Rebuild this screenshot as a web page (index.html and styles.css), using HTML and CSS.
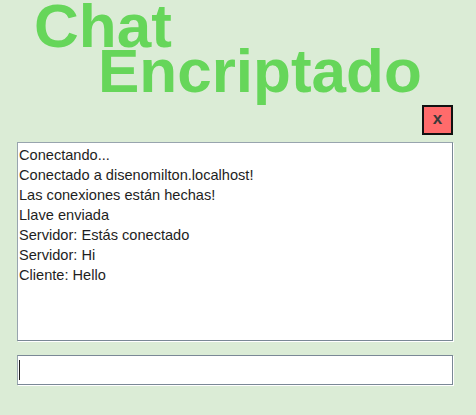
FILE: index.html
```html
<!DOCTYPE html>
<html lang="es">
<head>
<meta charset="utf-8">
<title>Chat Encriptado</title>
<link rel="stylesheet" href="styles.css">
</head>
<body>
<div class="app">
  <header class="title">
    <div class="title-line1">Chat</div>
    <div class="title-line2">Encriptado</div>
  </header>
  <div class="toolbar">
    <button class="close-btn" type="button">x</button>
  </div>
  <div class="log">
    <div class="log-line">Conectando...</div>
    <div class="log-line">Conectado a disenomilton.localhost!</div>
    <div class="log-line">Las conexiones están hechas!</div>
    <div class="log-line">Llave enviada</div>
    <div class="log-line">Servidor: Estás conectado</div>
    <div class="log-line">Servidor: Hi</div>
    <div class="log-line">Cliente: Hello</div>
  </div>
  <div class="input-box"><span class="caret"></span></div>
</div>
</body>
</html>
```
FILE: styles.css
```css
html, body {
  margin: 0;
  padding: 0;
  background: #dbecd6;
  width: 476px;
  height: 415px;
  overflow: hidden;
}
.app {
  padding: 3px 0 0 17px;
  width: 436px;
  font-family: "Liberation Sans", Arial, sans-serif;
}
.title {
  color: #66d65a;
  font-weight: bold;
  font-size: 62px;
  line-height: 45px;
}
.title-line1 {
  padding-left: 17px;
}
.title-line2 {
  padding-left: 81px;
}
.toolbar {
  display: flex;
  justify-content: flex-end;
  margin-top: 12px;
}
.close-btn {
  width: 31px;
  height: 30px;
  box-sizing: border-box;
  border: 2px solid #111;
  background: #ff6b6b;
  color: #3a3a3a;
  font-family: "Liberation Sans", Arial, sans-serif;
  font-weight: bold;
  font-size: 17px;
  padding: 0 0 3px 0;
  margin: 0;
  display: flex;
  align-items: center;
  justify-content: center;
}
.log {
  margin-top: 7px;
  height: 199px;
  box-sizing: border-box;
  background: #fff;
  border: 1px solid #7a8896;
  border-left-color: #98a4ae;
  border-top-color: #98a4ae;
  box-shadow: 1px 1px 0 #fff;
  padding: 2px 0 0 1px;
  font-size: 14.6px;
  line-height: 20px;
  color: #1e1e1e;
}
.input-box {
  margin-top: 14px;
  height: 30px;
  box-sizing: border-box;
  background: #fff;
  border: 1px solid #7a8896;
  border-left-color: #98a4ae;
  box-shadow: 1px 1px 0 #fff;
  padding: 4px 0 0 1px;
}
.caret {
  display: block;
  width: 1px;
  height: 20px;
  background: #222;
}
```
